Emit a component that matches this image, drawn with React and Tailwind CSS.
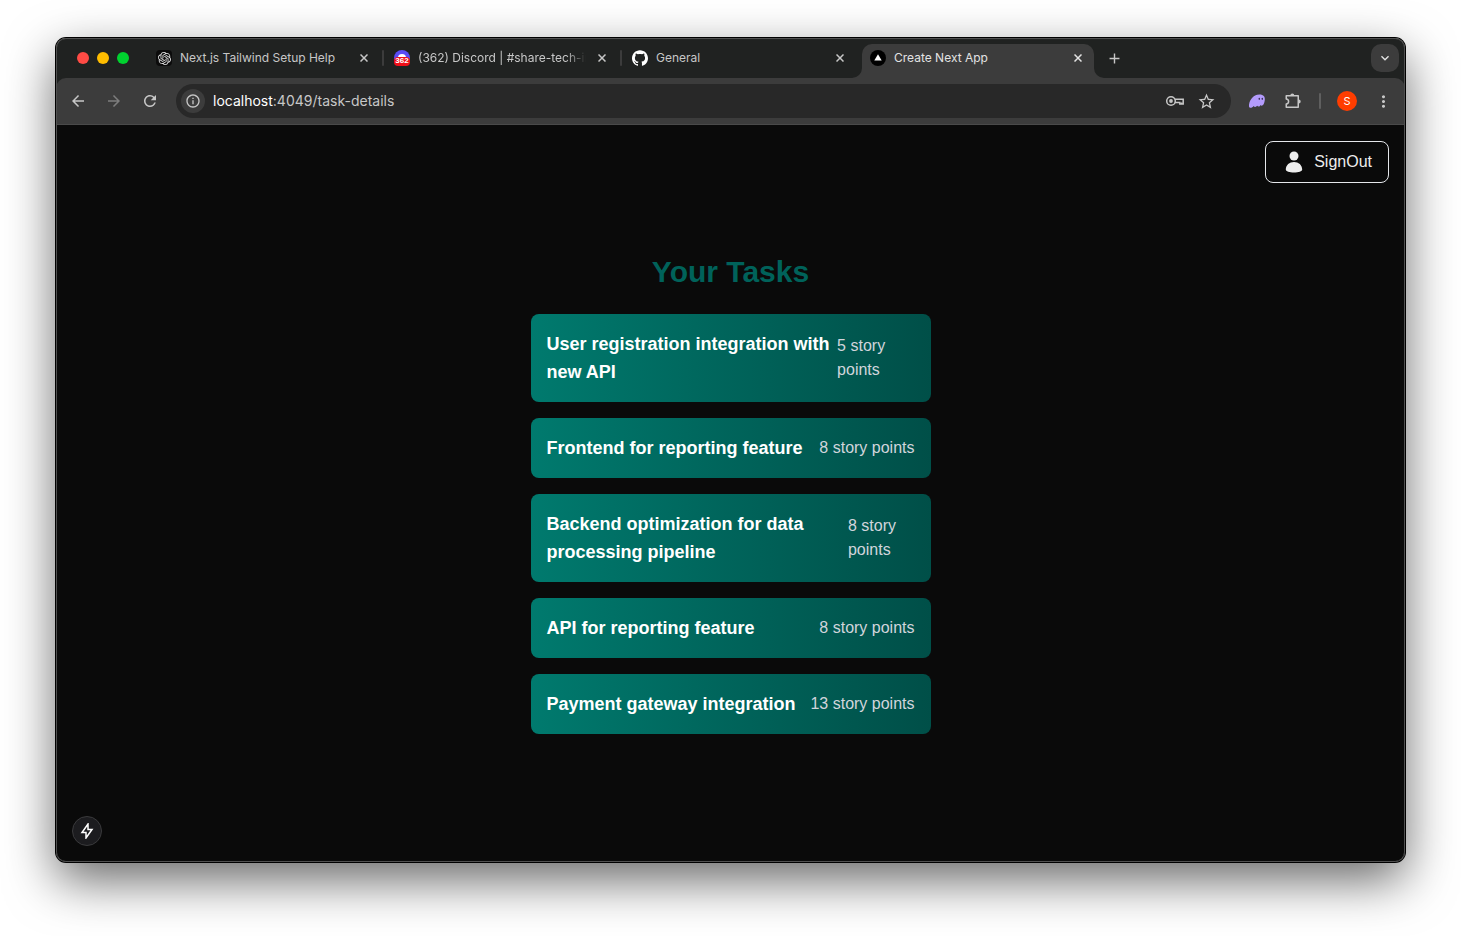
import {
  MdArrowBack,
  MdArrowForward,
  MdKeyboardArrowDown,
  MdMoreVert,
  MdAdd,
  MdRefresh,
  MdInfoOutline,
  MdStarBorder,
} from "react-icons/md";
import { SiGithub, SiOpenai } from "react-icons/si";

const tabs = [
  { id: "help", title: "Next.js Tailwind Setup Help" },
  { id: "discord", title: "(362) Discord | #share-tech-info" },
  { id: "github", title: "General" },
  { id: "next", title: "Create Next App", active: true },
];

const tasks = [
  { title: "User registration integration with new API", points: 5 },
  { title: "Frontend for reporting feature", points: 8 },
  { title: "Backend optimization for data processing pipeline", points: 8 },
  { title: "API for reporting feature", points: 8 },
  { title: "Payment gateway integration", points: 13 },
];

const Favicon = ({ id }) => {
  if (id === "help") {
    return (
      <span className="flex size-4 shrink-0 items-center justify-center rounded-sm bg-[#0b0b0b] text-[#e3e3e3]">
        <SiOpenai size={13} />
      </span>
    );
  }
  if (id === "discord") {
    return (
      <span className="relative size-4 shrink-0 rounded-full bg-[#5a4cf5]">
        <span className="absolute left-1 top-1 h-1 w-2 rounded-t-sm bg-white" />
        <span className="absolute bottom-0 left-0 flex h-[9px] w-4 items-center justify-center rounded-sm bg-[#f00e18] font-['Liberation_Sans',sans-serif] text-[8px] font-bold text-white">
          362
        </span>
      </span>
    );
  }
  if (id === "github") {
    return <SiGithub size={16} className="shrink-0 text-white" />;
  }
  return (
    <svg viewBox="0 0 16 16" className="size-4 shrink-0">
      <circle cx="8" cy="8" r="8" fill="#000" />
      <path d="M8 4.2 11.7 10.6H4.3z" fill="#fff" />
    </svg>
  );
};

const CloseIcon = () => (
  <svg viewBox="0 0 8 8" className="size-2" fill="none" stroke="currentColor">
    <path d="M.5.5 7.500 7.500M7.500.5.5 7.500" strokeWidth="1.500" />
  </svg>
);

const Tab = ({ tab, separator }) => (
  <div
    className={
      tab.active
        ? "relative flex h-[34px] min-w-0 max-w-[232px] flex-1 rounded-t-[10px] bg-[#3c3c3c] pb-1.5 pl-2 pr-2 text-[#e3e3e3]"
        : "relative flex h-[34px] min-w-0 max-w-[232px] flex-1 pb-1.5 pl-2 pr-2 text-[#c7c7c7]"
    }
  >
    {/* curved feet of the active tab */}
    {tab.active && (
      <>
        <svg viewBox="0 0 10 10" className="absolute -left-2.5 bottom-0 size-2.5">
          <path d="M10 0A10 10 0 0 1 0 10H10z" fill="#3c3c3c" />
        </svg>
        <svg viewBox="0 0 10 10" className="absolute -right-2.5 bottom-0 size-2.5">
          <path d="M0 0A10 10 0 0 0 10 10H0z" fill="#3c3c3c" />
        </svg>
      </>
    )}
    <a href="#" className="flex min-w-0 flex-1 items-center gap-2">
      <Favicon id={tab.id} />
      <span
        className={
          tab.id === "discord"
            ? "overflow-hidden whitespace-nowrap [mask-image:linear-gradient(to_right,#000_88%,transparent)]"
            : "overflow-hidden whitespace-nowrap"
        }
      >
        {tab.title}
      </span>
    </a>
    <button
      aria-label="Close tab"
      className="ml-2 flex w-4 shrink-0 items-center justify-center"
    >
      <CloseIcon />
    </button>
    {separator && (
      <span className="absolute -right-1 top-1.5 h-4 w-0.5 rounded-full bg-[#3c3c3c]" />
    )}
  </div>
);

const TabBar = () => (
  <div className="flex h-10 items-end bg-[#202221] pl-[21px] pr-1.5 font-['Inter',sans-serif] text-xs">
    <div className="flex gap-2 self-center">
      <span className="size-3 rounded-full bg-[#ff4b45]" />
      <span className="size-3 rounded-full bg-[#ffbd00]" />
      <span className="size-3 rounded-full bg-[#00d22f]" />
    </div>
    <div className="ml-[19px] flex flex-1 gap-1.5">
      {tabs.map((tab, i) => (
        <Tab key={tab.id} tab={tab} separator={i < 2} />
      ))}
      <button
        aria-label="New tab"
        className="ml-0.5 flex h-7 w-6 items-center justify-center text-[#c7c7c7]"
      >
        <MdAdd size={17} />
      </button>
    </div>
    <button
      aria-label="Search tabs"
      className="mb-1.5 flex size-7 items-center justify-center rounded-[10px] bg-[#3c3c3c] text-[#e3e3e3]"
    >
      <MdKeyboardArrowDown size={16} />
    </button>
  </div>
);

const KeyIcon = () => (
  <svg viewBox="0 0 20 16" className="h-4 w-5" fill="none" stroke="currentColor">
    <circle cx="6" cy="8" r="4.3" strokeWidth="1.5" />
    <circle cx="6" cy="8" r="1.9" fill="currentColor" stroke="none" />
    <path d="M9.8 6.2H18.2V10.9H14.800V9.500H9.8M16.500 9.500V11" strokeWidth="1.5" />
  </svg>
);

const GhostIcon = () => (
  <svg viewBox="0 0 18 16" className="h-4 w-[18px]">
    <path
      d="M1 13.5C.6 8 5 1.500 11.500 1.500C15.500 1.500 17.200 3.800 16.800 7C16.500 9.300 15.800 12 14.300 12.600C13.300 13 12.900 12.300 12.400 11.900C12 13.400 10.300 14 9.200 12.800C8 14.400 6.200 14 5.600 13C4.500 15 1.300 15.500 1 13.500Z"
      fill="#b39bfb"
    />
    <ellipse cx="11.300" cy="5.800" rx=".8" ry="1.100" fill="#3c315b" />
    <ellipse cx="14.300" cy="5.800" rx=".8" ry="1.100" fill="#3c315b" />
  </svg>
);

const PuzzleIcon = () => (
  <svg viewBox="0 0 18 18" className="size-[18px]">
    <path
      d="M2.250 3.750H14.250V15.250H2.250V12Q4.600 11.700 4.600 9.500T2.250 7z"
      fill="none"
      stroke="currentColor"
      strokeWidth="1.500"
      strokeLinejoin="round"
    />
    <path
      d="M6.300 3.500A2 2 0 0 1 10.300 3.500zM14.700 7.500A2 2 0 0 1 14.700 11.500z"
      fill="currentColor"
    />
  </svg>
);

const Toolbar = () => (
  <div className="bg-[#202221]">
    <div className="flex h-[47px] items-center rounded-t-[10px] border-b border-[#4a4a4a] bg-[#3c3c3c] pl-2 pr-2 font-['Inter',sans-serif] text-[#c7c7c7]">
      <div className="flex gap-2">
        <button aria-label="Back" className="flex size-7 items-center justify-center">
          <MdArrowBack size={18} />
        </button>
        <button
          aria-label="Forward"
          className="flex size-7 items-center justify-center text-[#7d7d7d]"
        >
          <MdArrowForward size={18} />
        </button>
        <button aria-label="Reload" className="flex size-7 items-center justify-center">
          <MdRefresh size={18} />
        </button>
      </div>

      {/* address bar */}
      <div className="ml-3 flex h-[34px] flex-1 items-center rounded-full bg-[#282828] pl-[5px] pr-[15px]">
        <button
          aria-label="Site information"
          className="flex size-6 items-center justify-center rounded-full bg-[#3c3c3c]"
        >
          <MdInfoOutline size={16} />
        </button>
        <a href="#" className="ml-2 flex-1 text-sm">
          <span className="text-white">localhost</span>:4049/task-details
        </a>
        <button aria-label="Passwords">
          <KeyIcon />
        </button>
        <button aria-label="Bookmark" className="ml-3">
          <MdStarBorder size={19} />
        </button>
      </div>

      <button aria-label="Wallet" className="ml-3 flex size-7 items-center justify-center">
        <GhostIcon />
      </button>
      <button aria-label="Extensions" className="ml-2 flex size-7 items-center justify-center">
        <PuzzleIcon />
      </button>
      <span className="ml-3 h-4 w-0.5 rounded-full bg-[#5f5f5f]" />
      <button
        aria-label="Profile"
        className="ml-4 flex size-5 items-center justify-center rounded-full bg-[#ff3d00] text-[11px] text-white"
      >
        S
      </button>
      <button aria-label="Menu" className="ml-3 flex size-7 items-center justify-center">
        <MdMoreVert size={19} />
      </button>
    </div>
  </div>
);

const TaskCard = ({ task }) => (
  <li className="flex items-center justify-between rounded-lg bg-linear-to-r from-[#007a6e] to-[#004f48] p-4">
    <h2 className="text-lg font-semibold text-white">{task.title}</h2>
    <p className="text-gray-300">{task.points} story points</p>
  </li>
);

const TaskPage = () => (
  <div className="relative flex flex-1 flex-col items-center justify-center bg-[#0a0a0a] font-['Liberation_Sans',Arial,sans-serif]">
    <button className="absolute right-4 top-4 flex items-center rounded-lg border border-gray-200 px-4 py-2 text-[#ededed]">
      <svg viewBox="0 0 24 24" className="mr-2 size-6" fill="currentColor">
        <circle cx="12" cy="6" r="4.500" />
        <path d="M3.800 19.500C3.800 15 7.500 12 12 12s8.200 3 8.200 7.500c0 2-3.700 3-8.200 3s-8.200-1-8.200-3z" />
      </svg>
      SignOut
    </button>

    <h1 className="mb-6 text-3xl font-bold text-[#00625a]">Your Tasks</h1>
    <ul className="w-[400px] space-y-4">
      {tasks.map((task) => (
        <TaskCard key={task.title} task={task} />
      ))}
    </ul>

    {/* dev tools indicator */}
    <button
      aria-label="Dev tools"
      className="absolute bottom-4 left-4 flex size-[30px] items-center justify-center rounded-full border border-[#3a3a3c] bg-[#1c1c1f] text-white"
    >
      <svg viewBox="0 0 16 16" className="size-4" fill="none" stroke="currentColor">
        <path d="M9 1V6.500H13L7 15V9.500H3z" strokeWidth="1.500" />
      </svg>
    </button>
  </div>
);

const App = () => {
  return (
    <div className="flex min-h-screen bg-white px-14 pb-[74px] pt-[38px]">
      <div className="relative flex flex-1 flex-col overflow-hidden rounded-[10px] shadow-[0_0_0_1px_#000,0_18px_50px_rgba(0,0,0,0.6)]">
        <TabBar />
        <Toolbar />
        <TaskPage />
        {/* hairline on the window edge */}
        <div className="pointer-events-none absolute inset-0 rounded-[10px] border border-[#505050]" />
      </div>
    </div>
  );
};

export default App;
